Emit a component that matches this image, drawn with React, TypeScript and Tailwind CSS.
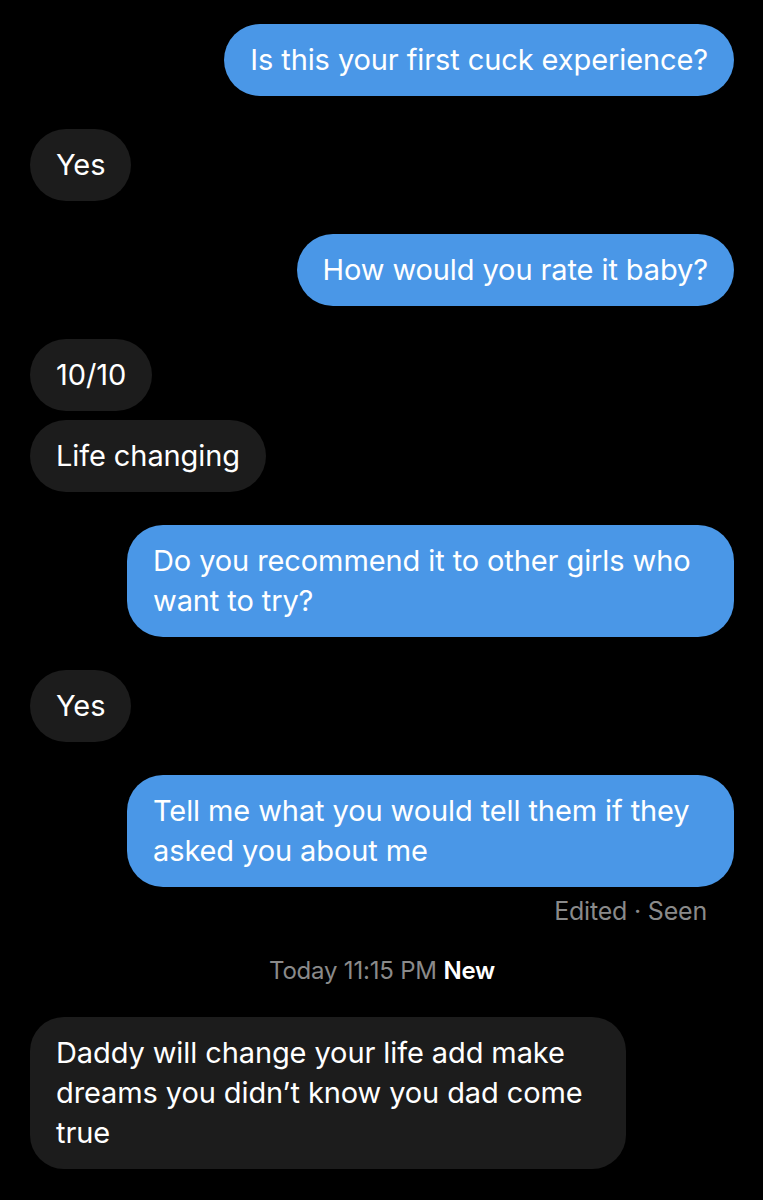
import React from "react";

type Msg = { from: "me" | "them"; text: string; gap: "lg" | "sm" };

const messages: Msg[] = [
  { from: "me", text: "Is this your first cuck experience?", gap: "lg" },
  { from: "them", text: "Yes", gap: "lg" },
  { from: "me", text: "How would you rate it baby?", gap: "lg" },
  { from: "them", text: "10/10", gap: "lg" },
  { from: "them", text: "Life changing", gap: "sm" },
  { from: "me", text: "Do you recommend it to other girls who want to try?", gap: "lg" },
  { from: "them", text: "Yes", gap: "lg" },
  { from: "me", text: "Tell me what you would tell them if they asked you about me", gap: "lg" },
];

const Bubble = ({ msg }: { msg: Msg }) => {
  const mine = msg.from === "me";
  return (
    <div className={`flex ${mine ? "justify-end" : "justify-start"} ${msg.gap === "lg" ? "mt-[33px]" : "mt-[9px]"} first:mt-0`}>
      <div
        className={`max-w-[607px] rounded-[36px] px-[26px] py-4 text-[29px] leading-[40px] tracking-[-0.1px] text-white ${
          mine ? "bg-[#4a97e7]" : "bg-[#1c1c1c]"
        }`}
      >
        {msg.text}
      </div>
    </div>
  );
};

export default function App() {
  return (
    <div className="min-h-[1200px] w-[763px] bg-black pl-[30px] pr-[29px] pt-6 font-['Inter',sans-serif]">
      <div className="flex flex-col">
        {messages.map((m, i) => (
          <Bubble key={i} msg={m} />
        ))}
      </div>
      <div className="mt-2 pr-[27px] text-right text-[25px] leading-8 tracking-[-0.2px] text-[#8a8a8a]">
        Edited · Seen
      </div>
      <div className="mt-7 text-center text-[24px] leading-8 tracking-[-0.2px] text-[#8a8a8a]">
        Today 11:15 PM <span className="font-semibold text-white">New</span>
      </div>
      <div className="mt-[30px] flex justify-start">
        <div className="w-[596px] rounded-[34px] bg-[#1c1c1c] px-[26px] py-4 text-[29px] leading-[40px] tracking-[-0.1px] text-white">
          Daddy will change your life add make dreams you didn’t know you dad come true
        </div>
      </div>
    </div>
  );
}
